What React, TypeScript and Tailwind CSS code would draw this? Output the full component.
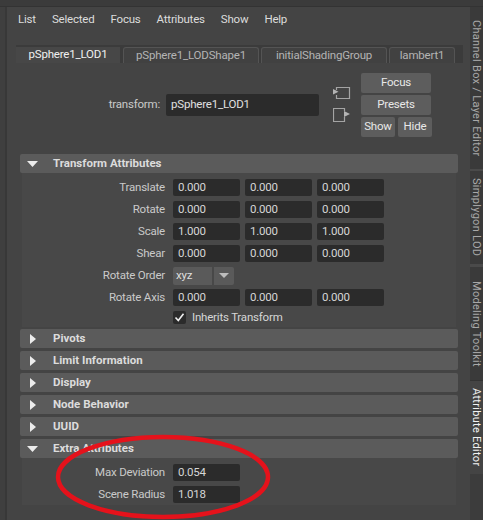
import React from "react";

function Field({ v }: { v: string }) {
  return (
    <div className="h-[17px] w-[67px] bg-[#2b2b2b] rounded-[2px] pl-[5px] flex items-center text-[#d6d6d6]">
      {v}
    </div>
  );
}

function Row({ label, children }: { label: string; children: React.ReactNode }) {
  return (
    <div className="flex items-center h-[17px]">
      <div className="w-[143px] text-right text-[#cacaca] whitespace-nowrap">{label}</div>
      <div className="ml-[8px] flex gap-[5px] items-center">{children}</div>
    </div>
  );
}

function Header({ title, open }: { title: string; open?: boolean }) {
  return (
    <div className="h-[19px] bg-[#5b5b5b] rounded-[2px] flex items-center shrink-0">
      <div className="w-[33px] flex items-center">
        {open ? (
          <svg width="11" height="6" viewBox="0 0 11 6" className="ml-[7px]">
            <polygon points="0,0 11,0 5.5,6" fill="#ececec" />
          </svg>
        ) : (
          <svg width="6" height="10" viewBox="0 0 6 10" className="ml-[10px]">
            <polygon points="0,0 6,5 0,10" fill="#ececec" />
          </svg>
        )}
      </div>
      <span className="font-bold tracking-normal text-[#dcdcdc] whitespace-nowrap">{title}</span>
    </div>
  );
}

function Btn({ label, w }: { label: string; w: "wide" | "narrow" }) {
  return (
    <div
      className={
        w === "wide"
          ? "h-[20px] w-[70px] bg-[#5d5d5d] rounded-[2px] flex items-center justify-center text-[#e8e8e8]"
          : "h-[20px] w-[34px] bg-[#5d5d5d] rounded-[2px] flex items-center justify-center text-[#e8e8e8]"
      }
    >
      {label}
    </div>
  );
}

export default function App() {
  return (
    <div className="relative w-[483px] h-[520px] overflow-hidden bg-[#444444] text-[11.5px] tracking-[-0.2px] leading-none font-['Roboto',sans-serif] text-[#cccccc] flex flex-col">
      <div className="h-[7px] bg-[#3b3b3b] border-b border-[#333333] shrink-0" />
      <div className="flex flex-1 min-h-0">
        <div className="w-[7px] bg-[#3f3f3f] border-r-2 border-[#383838] shrink-0" />
        <div className="flex-1 flex flex-col min-w-0">
          {/* menu */}
          <div className="h-[26px] flex items-center pl-[11px] gap-[16px] text-[#dcdcdc] shrink-0">
            <span>List</span>
            <span>Selected</span>
            <span>Focus</span>
            <span>Attributes</span>
            <span>Show</span>
            <span>Help</span>
          </div>
          {/* tabs */}
          <div className="mt-[12px] ml-[9px] mr-[7px] h-[18px] bg-[#3b3b3b] flex items-end pt-[2px] shrink-0">
            <div className="h-[16px] w-[104px] bg-[#474747] flex items-center justify-center text-[#f0f0f0] whitespace-nowrap">
              pSphere1_LOD1
            </div>
            <div className="ml-[3px] h-[16px] w-[136px] bg-[#414141] border-t border-l border-r border-[#545454] rounded-t-[3px] flex items-center justify-center text-[#b4b4b4] whitespace-nowrap">
              pSphere1_LODShape1
            </div>
            <div className="ml-[2px] h-[16px] w-[126px] bg-[#414141] border-t border-l border-r border-[#545454] rounded-t-[3px] flex items-center justify-center text-[#b4b4b4] whitespace-nowrap">
              initialShadingGroup
            </div>
            <div className="ml-[2px] h-[16px] w-[66px] bg-[#414141] border-t border-l border-r border-[#545454] rounded-t-[3px] flex items-center justify-center text-[#b4b4b4] whitespace-nowrap">
              lambert1
            </div>
          </div>
          {/* transform row */}
          <div className="mt-[10px] h-[64px] flex shrink-0">
            <div className="mt-[21px] flex items-start">
              <div className="w-[153px] h-[22px] flex items-center justify-end text-[#cacaca]">transform:</div>
              <div className="ml-[6px] w-[153px] h-[22px] bg-[#2b2b2b] rounded-[2px] flex items-center pl-[5px] text-[#e0e0e0]">
                pSphere1_LOD1
              </div>
            </div>
            <div className="ml-[14px] mt-[13px]">
              <svg width="18" height="37" viewBox="0 0 18 37">
                <g stroke="#a4a4a4" strokeWidth="1.2" fill="none">
                  <path d="M3.5 4 V1.5 H16.5 V12.5 H3.5 V9" />
                  <path d="M11.5 25 V22.5 H0.5 V35.5 H11.5 V31" />
                </g>
                <polygon points="0,3 5.5,5.8 0,8.6" fill="#b4b4b4" />
                <polygon points="11,25 17,28 11,31" fill="#b4b4b4" />
              </svg>
            </div>
            <div className="ml-[10px] flex flex-col gap-[2px]">
              <Btn label="Focus" w="wide" />
              <Btn label="Presets" w="wide" />
              <div className="flex gap-[3px]">
                <Btn label="Show" w="narrow" />
                <Btn label="Hide" w="narrow" />
              </div>
            </div>
          </div>
          {/* sections */}
          <div className="mt-[17px] ml-[13px] w-[438px] flex flex-col">
            <Header title="Transform Attributes" open />
            <div className="mx-[2px] bg-[#484848] pt-[6px] pb-[3px] flex flex-col gap-[5px]">
              <Row label="Translate">
                <Field v="0.000" />
                <Field v="0.000" />
                <Field v="0.000" />
              </Row>
              <Row label="Rotate">
                <Field v="0.000" />
                <Field v="0.000" />
                <Field v="0.000" />
              </Row>
              <Row label="Scale">
                <Field v="1.000" />
                <Field v="1.000" />
                <Field v="1.000" />
              </Row>
              <Row label="Shear">
                <Field v="0.000" />
                <Field v="0.000" />
                <Field v="0.000" />
              </Row>
              <Row label="Rotate Order">
                <div className="flex gap-[2px]">
                  <div className="h-[18px] w-[39px] bg-[#5a5a5a] rounded-l-[2px] flex items-center pl-[3px] text-[#dedede]">
                    xyz
                  </div>
                  <div className="h-[18px] w-[20px] bg-[#5a5a5a] rounded-r-[2px] flex items-center justify-center">
                    <svg width="10" height="5" viewBox="0 0 10 5">
                      <polygon points="0,0 10,0 5,5" fill="#bdbdbd" />
                    </svg>
                  </div>
                </div>
              </Row>
              <Row label="Rotate Axis">
                <Field v="0.000" />
                <Field v="0.000" />
                <Field v="0.000" />
              </Row>
              <div className="flex items-center h-[13px] pl-[151px]">
                <div className="w-[13px] h-[13px] bg-[#2b2b2b] rounded-[2px] flex items-center justify-center">
                  <svg width="11" height="11" viewBox="0 0 11 11">
                    <path d="M1.5 5.5 L4.3 8.5 L9.5 1.8" stroke="#f0f0f0" strokeWidth="1.6" fill="none" />
                  </svg>
                </div>
                <span className="ml-[6px] text-[#d6d6d6] whitespace-nowrap">Inherits Transform</span>
              </div>
            </div>
            <div className="mt-[2px]">
              <Header title="Pivots" />
            </div>
            <div className="mt-[3px]">
              <Header title="Limit Information" />
            </div>
            <div className="mt-[3px]">
              <Header title="Display" />
            </div>
            <div className="mt-[3px]">
              <Header title="Node Behavior" />
            </div>
            <div className="mt-[3px]">
              <Header title="UUID" />
            </div>
            <div className="mt-[3px]">
              <Header title="Extra Attributes" open />
            </div>
            <div className="mx-[2px] bg-[#484848] pt-[6px] pb-[2px] flex flex-col gap-[5px]">
              <Row label="Max Deviation">
                <Field v="0.054" />
              </Row>
              <Row label="Scene Radius">
                <Field v="1.018" />
              </Row>
            </div>
          </div>
        </div>
        {/* sidebar */}
        <div className="w-[13px] bg-[#3a3a3a] flex flex-col shrink-0 overflow-hidden text-[11px] tracking-[0.3px] text-[#a8a8a8]">
          <div className="h-[162px] flex items-center justify-center shrink-0">
            <span className="[writing-mode:vertical-rl] whitespace-nowrap">Channel Box / Layer Editor</span>
          </div>
          <div className="h-[2px] bg-[#4a4a4a] shrink-0" />
          <div className="h-[93px] flex items-center justify-center shrink-0">
            <span className="[writing-mode:vertical-rl] whitespace-nowrap">Simplygon LOD</span>
          </div>
          <div className="h-[3px] bg-[#4a4a4a] shrink-0" />
          <div className="h-[113px] flex items-center justify-center shrink-0">
            <span className="[writing-mode:vertical-rl] whitespace-nowrap">Modeling Toolkit</span>
          </div>
          <div className="h-[1px] bg-[#333333] shrink-0" />
          <div className="h-[93px] bg-[#444444] flex items-center justify-center shrink-0 text-[#f2f2f2]">
            <span className="[writing-mode:vertical-rl] whitespace-nowrap">Attribute Editor</span>
          </div>
          <div className="flex-1 bg-[#3c3c3c]" />
        </div>
      </div>
      <svg className="absolute inset-0 pointer-events-none" width="483" height="520" viewBox="0 0 483 520">
        <ellipse cx="163" cy="477" rx="105" ry="40" fill="none" stroke="#e5121b" strokeWidth="4.5" />
      </svg>
    </div>
  );
}
